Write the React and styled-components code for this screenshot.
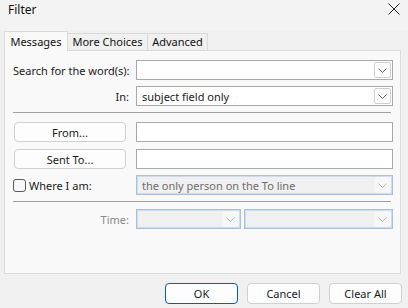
import React from "react";
import styled, { createGlobalStyle } from "styled-components";

const GlobalStyle = createGlobalStyle`
  html, body {
    margin: 0;
    padding: 0;
    background: #f0f0f0;
  }
  body {
    font-family: "Noto Sans", "Open Sans", sans-serif;
    font-size: 11px;
    color: #1a1a1a;
  }
`;

const Dialog = styled.div`
  width: 408px;
  height: 308px;
  background: #f0f0f0;
  display: flex;
  flex-direction: column;
  overflow: hidden;
`;

const TitleBar = styled.div`
  height: 31px;
  display: flex;
  align-items: flex-start;
  justify-content: space-between;
  padding: 1px 7px 0 8px;
  box-sizing: border-box;
  background: #f3f3f3;
`;

const Title = styled.span`
  font-size: 12px;
  line-height: 18px;
  color: #111;
`;

const Close = styled.svg`
  width: 12px;
  height: 12px;
  margin-top: 2px;
  margin-right: 1px;
`;

const Tabs = styled.div`
  display: flex;
  align-items: flex-end;
  padding-left: 4px;
  height: 20px;
  position: relative;
  z-index: 1;
`;

const Tab = styled.div`
  width: ${(p) => p.$w}px;
  height: ${(p) => (p.$active ? "20px" : "18px")};
  display: flex;
  align-items: center;
  justify-content: center;
  border: 1px solid #d9d9d9;
  border-bottom: ${(p) => (p.$active ? "none" : "1px solid #d9d9d9")};
  border-left: ${(p) => (p.$active ? "1px solid #d9d9d9" : "none")};
  background: ${(p) => (p.$active ? "#f9f9f9" : "#f0f0f0")};
  box-sizing: border-box;
  color: #111;
  font-size: 11px;
  line-height: 16px;
  white-space: nowrap;
`;

const Panel = styled.div`
  margin: -1px 7px 0 4px;
  height: 224px;
  background: #f9f9f9;
  border: 1px solid #dcdcdc;
  box-sizing: border-box;
  padding: 9px 7px 0 8px;
  display: flex;
  flex-direction: column;
`;

const Row = styled.div`
  display: grid;
  grid-template-columns: 116px 1fr;
  column-gap: 7px;
  align-items: center;
  height: ${(p) => p.$h || 20}px;
  margin-top: ${(p) => p.$mt || 0}px;
`;

const Label = styled.span`
  text-align: right;
  color: ${(p) => (p.$disabled ? "#8a8a8a" : "#1a1a1a")};
  white-space: nowrap;
`;

const Pair = styled.div`
  display: grid;
  grid-template-columns: 105px 1fr;
  column-gap: 3px;
  height: 100%;
`;

const Input = styled.div`
  height: 100%;
  box-sizing: border-box;
  border: 1px solid #a9a9a9;
  background: #ffffff;
`;

const Select = styled.div`
  height: 100%;
  box-sizing: border-box;
  border: 1px solid ${(p) => (p.$disabled ? "#a6c0e0" : "#a9a9a9")};
  background: ${(p) => (p.$disabled ? "#f0f0f0" : "#ffffff")};
  display: flex;
  align-items: center;
  justify-content: space-between;
  padding: 1px 1px 1px 5px;
  color: ${(p) => (p.$disabled ? "#6d6d6d" : "#1a1a1a")};
  box-shadow: ${(p) => (p.$disabled ? "inset 0 0 0 1px #cfdcec" : "none")};
  white-space: nowrap;
`;

const ArrowBox = styled.div`
  width: 17px;
  align-self: stretch;
  box-sizing: border-box;
  border: 1px solid ${(p) => (p.$disabled ? "#f6f6f6" : "#cfcfcf")};
  background: ${(p) => (p.$disabled ? "#f7f7f7" : "#ffffff")};
  display: flex;
  align-items: center;
  justify-content: center;
  border-radius: 2px;
`;

const Separator = styled.div`
  height: 1px;
  background: #a0a0a0;
  margin: ${(p) => p.$m || "0"};
  margin-right: 2px;
`;

const SmallButton = styled.div`
  width: 112px;
  height: 100%;
  box-sizing: border-box;
  border: 1px solid #d0d0d0;
  border-radius: 4px;
  background: #fdfdfd;
  display: flex;
  align-items: center;
  justify-content: center;
  color: #1a1a1a;
  margin-left: 1px;
`;

const CheckLabel = styled.label`
  display: flex;
  align-items: center;
  gap: 3px;
  height: 100%;
`;

const Box = styled.span`
  width: 13px;
  height: 13px;
  box-sizing: border-box;
  border: 1px solid #5c5c5c;
  border-radius: 3px;
  background: #f7f7f7;
  display: inline-block;
`;

const Footer = styled.div`
  display: flex;
  justify-content: flex-end;
  gap: 9px;
  padding: 9px 6px 0 0;
`;

const DlgButton = styled.div`
  width: 73px;
  height: 21px;
  box-sizing: border-box;
  border: 1px solid ${(p) => (p.$primary ? "#005fb8" : "#d0d0d0")};
  border-radius: 4px;
  background: #fdfdfd;
  display: flex;
  align-items: center;
  justify-content: center;
  color: #1a1a1a;
`;

function Chevron({ disabled }) {
  return (
    <svg width="9" height="5" viewBox="0 0 9 5">
      <path
        d="M0.5 0.5 L4.5 4.5 L8.5 0.5"
        fill="none"
        stroke={disabled ? "#b8b8b8" : "#606060"}
        strokeWidth="1"
      />
    </svg>
  );
}

function Dropdown({ text, disabled }) {
  return (
    <Select $disabled={disabled}>
      <span>{text}</span>
      <ArrowBox $disabled={disabled}>
        <Chevron disabled={disabled} />
      </ArrowBox>
    </Select>
  );
}

export default function App() {
  return (
    <Dialog>
      <GlobalStyle />
      <TitleBar>
        <Title>Filter</Title>
        <Close viewBox="0 0 12 12">
          <path d="M0.5 0.5 L11.5 11.5 M11.5 0.5 L0.5 11.5" stroke="#222" strokeWidth="1" />
        </Close>
      </TitleBar>
      <Tabs>
        <Tab $active $w={64}>Messages</Tab>
        <Tab $w={80}>More Choices</Tab>
        <Tab $w={60}>Advanced</Tab>
      </Tabs>
      <Panel>
        <Row>
          <Label>Search for the word(s):</Label>
          <Dropdown text="" />
        </Row>
        <Row $mt={6}>
          <Label>In:</Label>
          <Dropdown text="subject field only" />
        </Row>
        <Separator $m="6px 0 0 0" />
        <Row $mt={9}>
          <SmallButton>From...</SmallButton>
          <Input />
        </Row>
        <Row $mt={7}>
          <SmallButton>Sent To...</SmallButton>
          <Input />
        </Row>
        <Row $mt={6}>
          <CheckLabel>
            <Box />
            Where I am:
          </CheckLabel>
          <Dropdown text="the only person on the To line" disabled />
        </Row>
        <Separator $m="6px 0 0 0" />
        <Row $mt={7}>
          <Label $disabled>Time:</Label>
          <Pair>
            <Dropdown text="" disabled />
            <Dropdown text="" disabled />
          </Pair>
        </Row>
      </Panel>
      <Footer>
        <DlgButton $primary>OK</DlgButton>
        <DlgButton>Cancel</DlgButton>
        <DlgButton>Clear All</DlgButton>
      </Footer>
    </Dialog>
  );
}
